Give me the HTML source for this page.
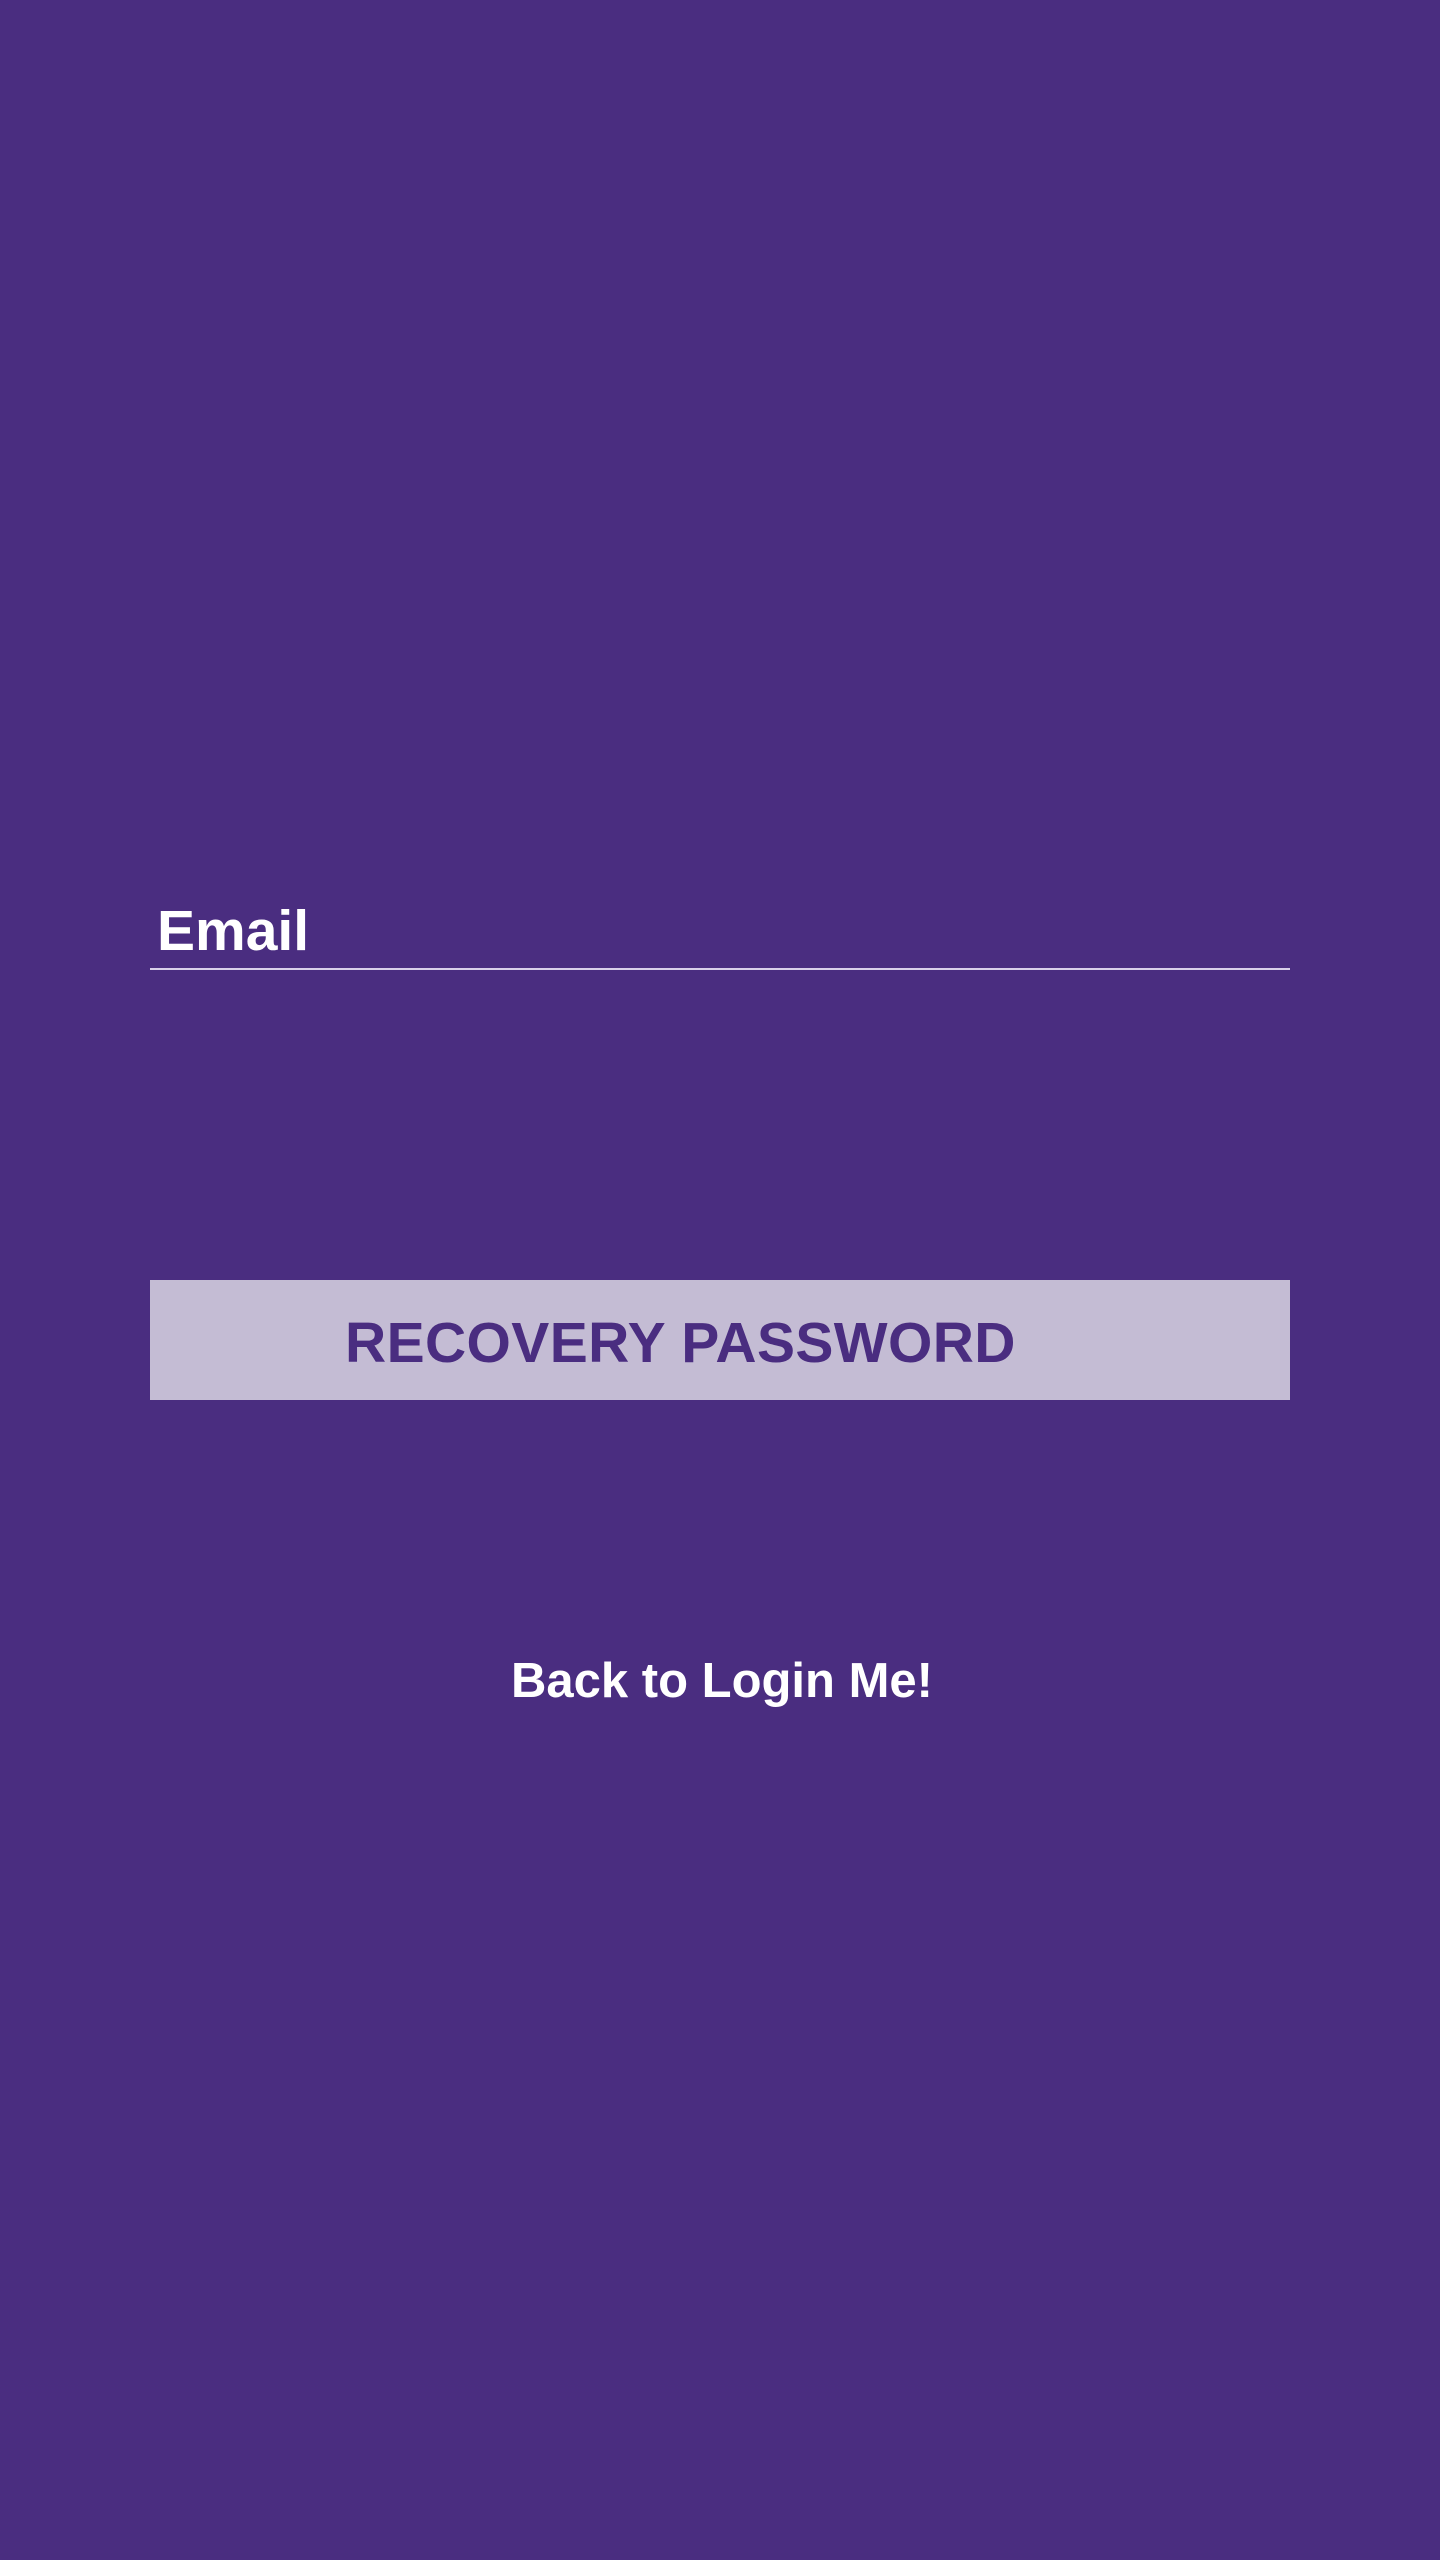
<!DOCTYPE html>
<html><head><style>
html,body{margin:0;padding:0;}
body{width:1440px;height:2560px;background:#4a2d80;position:relative;font-family:"Liberation Sans",Arial,sans-serif;font-weight:bold;overflow:hidden;}
.t{position:absolute;line-height:1;white-space:nowrap;}
</style></head><body>
<div class="t" style="left:157px;top:903px;font-size:57px;color:#fff;">Email</div>
<div style="position:absolute;left:150px;top:968px;width:1140px;height:2px;background:#d9d0ea;"></div>
<div style="position:absolute;left:150px;top:1280px;width:1140px;height:120px;background:#c4bcd4;"></div>
<div class="t" style="left:345px;top:1315px;font-size:57px;letter-spacing:0.4px;color:#4a2d80;">RECOVERY PASSWORD</div>
<div class="t" style="left:0;width:1444px;text-align:center;top:1657px;font-size:49px;color:#fff;">Back to Login Me!</div>
</body></html>
